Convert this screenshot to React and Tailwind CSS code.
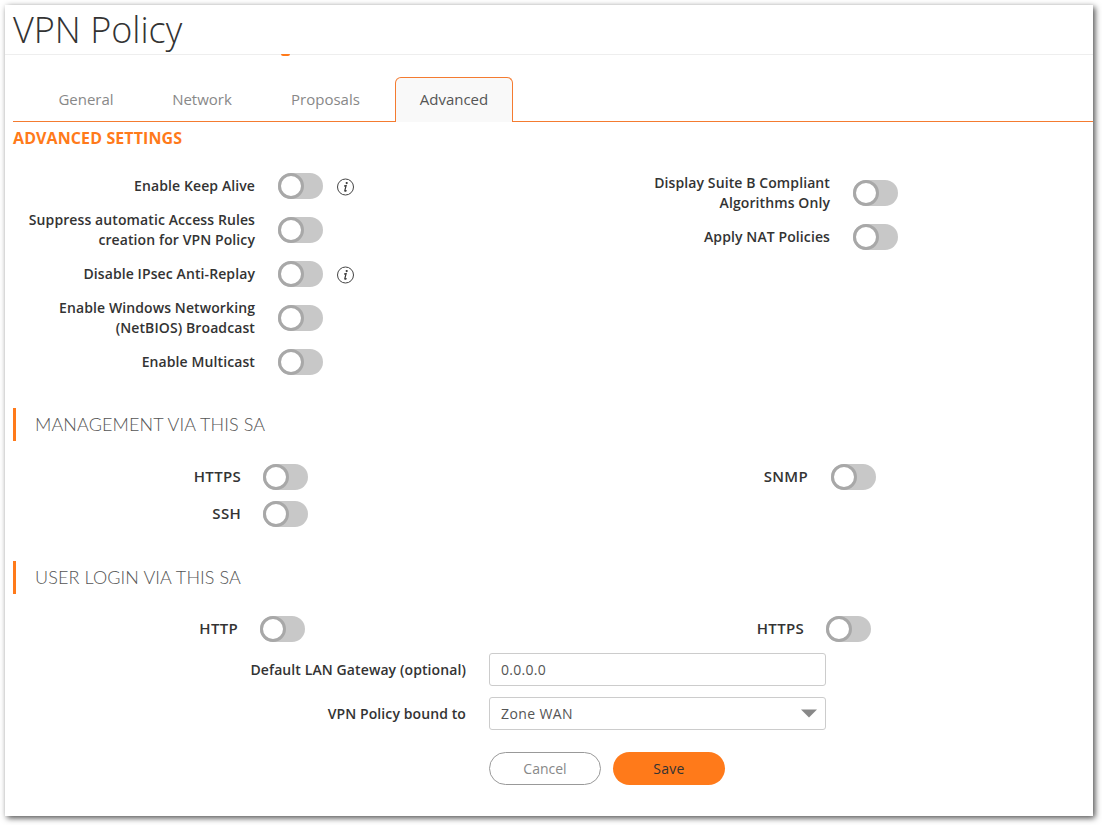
function Toggle() {
  return (
    <div className="w-[45px] h-[26px] rounded-full bg-[#c8c8c8] shrink-0 flex items-center">
      <div className="w-[26px] h-[26px] rounded-full bg-white border-[3px] border-[#a8a8a8]" />
    </div>
  );
}

function InfoIcon() {
  return (
    <svg width="18" height="18" viewBox="0 0 18 18" className="ml-[14px] mt-[2px] shrink-0">
      <circle cx="8.5" cy="9" r="8" fill="none" stroke="#444" strokeWidth="1" />
      <circle cx="9.7" cy="5" r="1.1" fill="#333" />
      <path d="M7.1 8.2l2-.5-1.3 4.9c-.1.5.2.7.6.5l1.2-.7" fill="none" stroke="#333" strokeWidth="1.2" />
    </svg>
  );
}

function ToggleRow({ label, labelWidth, gap = "ml-[23px]", height = "h-[44px]", caps, info }) {
  return (
    <div className={`flex items-center ${height}`}>
      <div
        className={`${labelWidth} text-right leading-[20px] font-semibold text-[#333] ${
          caps ? "text-[15px] tracking-[0.3px] pb-[2px]" : "text-[14px] tracking-[0.1px]"
        }`}
      >
        {label}
      </div>
      <div className={gap}>
        <Toggle />
      </div>
      {info && <InfoIcon />}
    </div>
  );
}

function SectionTitle({ children }) {
  return (
    <div className="h-[33px] border-l-[3px] border-[#ff7a1a] pl-[19px] flex items-center text-[18px] font-light text-[#555] font-['Lato',sans-serif] tracking-[0.1px]">
      {children}
    </div>
  );
}

function Tab({ children, width, active }) {
  if (active) {
    return (
      <div className={`${width} h-[45px] pb-[2px] -mb-px flex items-center justify-center border border-b-0 border-[#f47b30] rounded-t-[6px] bg-[#f9f9f9] text-[15px] text-[#555]`}>
        {children}
      </div>
    );
  }
  return <div className={`${width} h-[45px] flex items-center justify-center text-[15px] text-[#888]`}>{children}</div>;
}

export default function App() {
  return (
    <div className="h-[825px] w-[1102px] bg-white pt-[5px] pl-[5px] font-['Open_Sans',sans-serif]">
      <div className="relative w-[1088px] h-[811px] bg-white shadow-[2px_2px_6px_rgba(0,0,0,0.7)]">
        <div className="h-[50px] border-b border-[#eeeeee] pl-[8px] flex items-center text-[36px] font-light text-[#333]">
          VPN Policy
        </div>
        <div className="absolute left-[276px] top-[49px] w-[9px] h-[2px] rounded-b-full bg-[#ff7a1a]" />

        <div className="ml-[8px] mt-[22px] pl-[22px] h-[45px] border-b border-[#f47b30] flex gap-[11px]">
          <Tab width="w-[102px]">General</Tab>
          <Tab width="w-[108px]">Network</Tab>
          <Tab width="w-[117px]">Proposals</Tab>
          <Tab width="w-[118px]" active>Advanced</Tab>
        </div>

        <div className="pl-[8px]">
          <div className="mt-[6px] h-[20px] flex items-center text-[16px] font-bold text-[#ff7a1a] tracking-[0.1px]">
            ADVANCED SETTINGS
          </div>

          <div className="mt-[16px] flex">
            <div className="w-[587px]">
              <ToggleRow label="Enable Keep Alive" labelWidth="w-[242px]" info />
              <ToggleRow label={<>Suppress automatic Access Rules<br />creation for VPN Policy</>} labelWidth="w-[242px]" />
              <ToggleRow label="Disable IPsec Anti-Replay" labelWidth="w-[242px]" info />
              <ToggleRow label={<>Enable Windows Networking<br />(NetBIOS) Broadcast</>} labelWidth="w-[242px]" />
              <ToggleRow label="Enable Multicast" labelWidth="w-[242px]" />
            </div>
            <div className="pt-[7px]">
              <ToggleRow label={<>Display Suite B Compliant<br />Algorithms Only</>} labelWidth="w-[230px]" />
              <ToggleRow label="Apply NAT Policies" labelWidth="w-[230px]" />
            </div>
          </div>

          <div className="mt-[24px]">
            <SectionTitle>MANAGEMENT VIA THIS SA</SectionTitle>
          </div>

          <div className="mt-[17px] flex">
            <div className="w-[573px]">
              <ToggleRow label="HTTPS" caps labelWidth="w-[228px]" gap="ml-[22px]" height="h-[37px]" />
              <ToggleRow label="SSH" caps labelWidth="w-[228px]" gap="ml-[22px]" height="h-[37px]" />
            </div>
            <ToggleRow label="SNMP" caps labelWidth="w-[222px]" height="h-[37px]" />
          </div>

          <div className="mt-[29px]">
            <SectionTitle>USER LOGIN VIA THIS SA</SectionTitle>
          </div>

          <div className="mt-[16px] flex">
            <div className="w-[573px]">
              <ToggleRow label="HTTP" caps labelWidth="w-[225px]" gap="ml-[22px]" height="h-[37px]" />
            </div>
            <ToggleRow label="HTTPS" caps labelWidth="w-[218px]" gap="ml-[22px]" height="h-[37px]" />
          </div>

          <div className="mt-[6px] flex items-center">
            <div className="w-[453px] text-right text-[14px] tracking-[0.1px] font-semibold text-[#333]">Default LAN Gateway (optional)</div>
            <div className="ml-[23px] w-[337px] h-[33px] border border-[#cccccc] rounded-[3px] pl-[11px] flex items-center text-[14px] tracking-[0.3px] text-[#555]">
              0.0.0.0
            </div>
          </div>
          <div className="mt-[11px] flex items-center">
            <div className="w-[453px] text-right text-[14px] tracking-[0.1px] font-semibold text-[#333]">VPN Policy bound to</div>
            <div className="ml-[23px] w-[337px] h-[33px] border border-[#cccccc] rounded-[3px] pl-[11px] pr-[8px] flex items-center justify-between text-[14px] tracking-[0.4px] text-[#555]">
              Zone WAN
              <svg width="16" height="9" viewBox="0 0 16 9">
                <path d="M0 0.5h16L8 8.5z" fill="#888" />
              </svg>
            </div>
          </div>

          <div className="mt-[22px] ml-[476px] flex gap-[12px]">
            <div className="w-[112px] h-[33px] rounded-full border border-[#999] flex items-center justify-center text-[14px] text-[#888]">
              Cancel
            </div>
            <div className="w-[112px] h-[33px] rounded-full bg-[#ff7a1a] flex items-center justify-center text-[14px] tracking-[0.3px] text-[#333]">
              Save
            </div>
          </div>
        </div>
      </div>
    </div>
  );
}
